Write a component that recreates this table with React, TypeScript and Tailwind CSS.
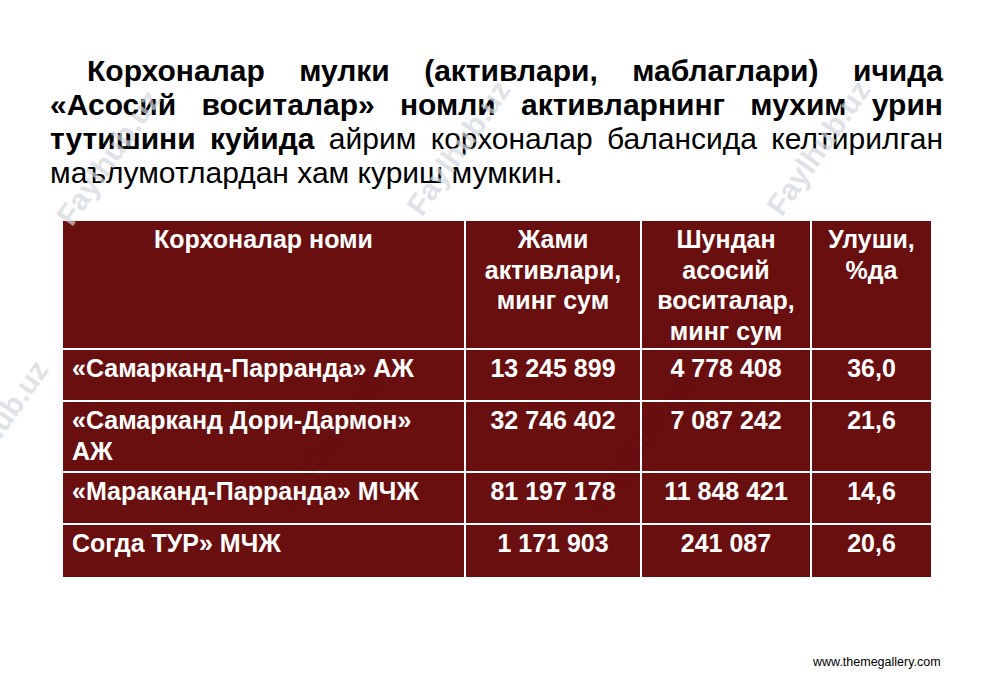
const rows = [
  { name: '«Самарканд-Парранда» АЖ', total: '13 245 899', fixed: '4 778 408', share: '36,0', h: 'h-[52px]' },
  { name: '«Самарканд Дори-Дармон» АЖ', total: '32 746 402', fixed: '7 087 242', share: '21,6', h: 'h-[71px]' },
  { name: '«Мараканд-Парранда» МЧЖ', total: '81 197 178', fixed: '11 848 421', share: '14,6', h: 'h-[52px]' },
  { name: 'Согда ТУР» МЧЖ', total: '1 171 903', fixed: '241 087', share: '20,6', h: 'h-[54px]' },
];

// Фоновые водяные знаки: сверху светлые, на таблице едва заметные
const marks = [
  { pos: 'left-[30px] top-[135px]', tone: 'text-gray-300/70' },
  { pos: 'left-[380px] top-[125px]', tone: 'text-gray-300/70' },
  { pos: 'left-[740px] top-[125px]', tone: 'text-gray-300/70' },
  { pos: 'left-[-82px] top-[405px]', tone: 'text-gray-300/70' },
  { pos: 'left-[250px] top-[420px]', tone: 'text-black/5' },
  { pos: 'left-[560px] top-[420px]', tone: 'text-black/5' },
];

function Watermark({ pos, tone }: { pos: string; tone: string }) {
  return (
    <div
      className={`absolute ${pos} ${tone} -rotate-[55deg] text-[30px] font-bold select-none pointer-events-none`}
      style={{ fontFamily: '"Liberation Sans", Arial, sans-serif' }}
    >
      Faylhub.uz
    </div>
  );
}

export default function App() {
  const th = 'border-2 border-white align-top text-center font-bold pt-[3px]';
  const td = 'border-2 border-white align-top font-bold pt-[3px]';

  return (
    <div
      className="relative w-[1000px] h-[678px] bg-white overflow-hidden"
      style={{ fontFamily: '"Liberation Sans", Arial, sans-serif' }}
    >
      <p className="ml-[50px] w-[893px] pt-[54px] text-[30px] leading-[34px] text-black text-justify indent-[37px]">
        <b>Корхоналар мулки (активлари, маблаглари) ичида «Асосий воситалар» номли активларнинг мухим урин тутишини куйида</b>{' '}
        айрим корхоналар балансида келтирилган маълумотлардан хам куриш мумкин.
      </p>

      <table className="absolute left-[61px] top-[219px] border-collapse bg-[#6a0f10] text-white text-[25px] leading-[30.5px]">
        <thead>
          <tr className="h-[129px]">
            <th className={`${th} w-[403px]`}>Корхоналар номи</th>
            <th className={`${th} w-[176px]`}>Жами активлари, минг сум</th>
            <th className={`${th} w-[170px]`}>Шундан асосий воситалар, минг сум</th>
            <th className={`${th} w-[121px]`}>Улуши, %да</th>
          </tr>
        </thead>
        <tbody>
          {rows.map((r) => (
            <tr key={r.name} className={r.h}>
              <td className={`${td} pl-[9px] pr-[30px]`}>{r.name}</td>
              <td className={`${td} text-center`}>{r.total}</td>
              <td className={`${td} text-center`}>{r.fixed}</td>
              <td className={`${td} text-center`}>{r.share}</td>
            </tr>
          ))}
        </tbody>
      </table>

      {marks.map((m) => (
        <Watermark key={m.pos} pos={m.pos} tone={m.tone} />
      ))}

      <div className="absolute left-[813px] top-[653px] text-[12.5px] text-black">
        www.themegallery.com
      </div>
    </div>
  );
}
